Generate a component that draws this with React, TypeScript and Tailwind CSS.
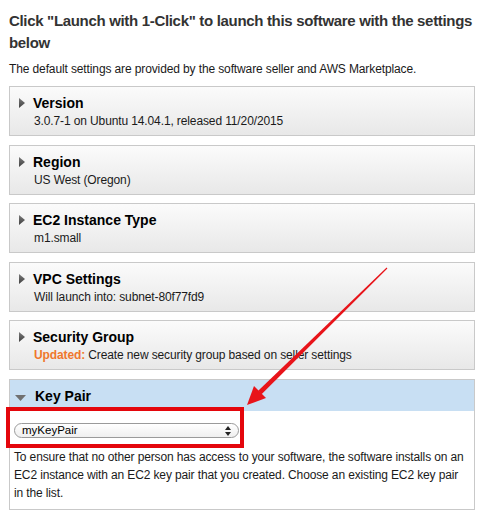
import { ReactNode } from 'react';

type Section = {
  title: string;
  detail: ReactNode;
};

const sections: Section[] = [
  { title: 'Version', detail: '3.0.7-1 on Ubuntu 14.04.1, released 11/20/2015' },
  { title: 'Region', detail: 'US West (Oregon)' },
  { title: 'EC2 Instance Type', detail: 'm1.small' },
  { title: 'VPC Settings', detail: 'Will launch into: subnet-80f77fd9' },
  {
    title: 'Security Group',
    detail: (
      <>
        <span className="font-bold text-[#f0772c]">Updated:</span> Create new security group based on seller settings
      </>
    ),
  },
];

const RightTriangle = () => (
  <svg width="6" height="10" viewBox="0 0 6 10" className="shrink-0">
    <defs>
      <linearGradient id="tri" x1="0" y1="0" x2="0" y2="1">
        <stop offset="0" stopColor="#7a7a7a" />
        <stop offset="1" stopColor="#404040" />
      </linearGradient>
    </defs>
    <path d="M0 0 L6 5 L0 10 Z" fill="url(#tri)" />
  </svg>
);

const CollapsedBox = ({ title, detail }: Section) => (
  <div className="h-[50px] border border-[#c9c9c9] bg-gradient-to-b from-[#fbfbfb] to-[#e8e8e8] pl-[9px] pt-[7px]">
    <div className="flex items-center gap-[8px] h-[18px]">
      <RightTriangle />
      <span className="text-[14px] font-bold leading-[18px] text-black">{title}</span>
    </div>
    <div className="pl-[15px] mt-[1px] text-[12px] leading-[16px] tracking-[-0.12px] text-[#1a1a1a] whitespace-nowrap">{detail}</div>
  </div>
);

const App = () => {
  return (
    <div className="relative w-[482px] h-[519px] overflow-hidden bg-white font-['Liberation_Sans',Arial,sans-serif]">
      <div className="px-[9px] pt-[10px]">
        <h1 className="text-[15px] font-bold leading-[22px] tracking-[-0.32px] text-[#333] whitespace-nowrap">
          Click "Launch with 1-Click" to launch this software with the settings
          <br />
          below
        </h1>
        <p className="mt-[7px] text-[12px] leading-[16px] tracking-[-0.12px] text-[#1a1a1a]">
          The default settings are provided by the software seller and AWS Marketplace.
        </p>

        <div className="mt-[9px] w-[466px] flex flex-col gap-[8.6px]">
          {sections.map((s) => (
            <CollapsedBox key={s.title} {...s} />
          ))}

          {/* Key Pair - open */}
          <div className="border border-[#c9c9c9]">
            <div className="h-[31px] bg-[#c8dff3] flex items-center gap-[9px] pl-[5px] pt-[1px]">
              <svg width="11" height="6" viewBox="0 0 11 6" className="mt-[4px]">
                <path d="M0 0 L11 0 L5.5 6 Z" fill="#707070" />
              </svg>
              <span className="text-[14px] font-bold leading-[18px] text-black">Key Pair</span>
            </div>
            <div className="px-[4px] pt-[12px] pb-[7px]">
              <div className="relative w-[225px] h-[15px] rounded-full border border-[#9a9a9a] bg-gradient-to-b from-white to-[#efefef] flex items-center pl-[7px]">
                <span className="text-[11.5px] leading-[13px] text-black">myKeyPair</span>
                <svg width="6" height="10" viewBox="0 0 6 10" className="absolute right-[7px] top-[2px]">
                  <path d="M0 4 L3 0 L6 4 Z" fill="#222" />
                  <path d="M0 6 L3 10 L6 6 Z" fill="#222" />
                </svg>
              </div>
              <p className="mt-[10px] text-[12px] leading-[18px] tracking-[-0.13px] text-[#1a1a1a] whitespace-nowrap">
                To ensure that no other person has access to your software, the software installs on an
                <br />
                EC2 instance with an EC2 key pair that you created. Choose an existing EC2 key pair
                <br />
                in the list.
              </p>
            </div>
          </div>
        </div>
      </div>

      {/* annotation: red box around the select */}
      <div className="absolute left-[6px] top-[407px] w-[238px] h-[41px] border-[4px] border-[#e4060c]" />

      {/* annotation: red arrow */}
      <svg width="482" height="519" className="absolute left-0 top-0 pointer-events-none">
        <polygon
          points="386.6,267.4 387.4,268.6 261.6,394.3 258.2,390.7"
          fill="#e8141a"
        />
        <polygon points="247,405 254,386 266,398" fill="#e8141a" />
      </svg>
    </div>
  );
};

export default App;
